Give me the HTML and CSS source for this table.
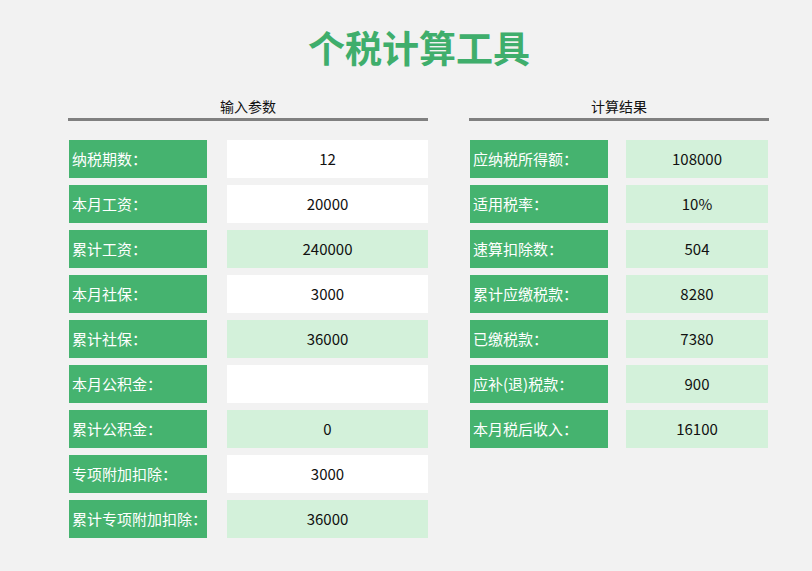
FILE: index.html
```html
<!DOCTYPE html>
<html lang="zh">
<head>
<meta charset="utf-8">
<title>个税计算工具</title>
<link rel="stylesheet" href="styles.css">
</head>
<body>
<h1 class="title">个税计算工具</h1>
<div class="panels">
  <section class="panel panel-left">
    <div class="panel-head">输入参数</div>
    <div class="rows">
      <div class="row"><div class="label">纳税期数：</div><div class="value white">12</div></div>
      <div class="row"><div class="label">本月工资：</div><div class="value white">20000</div></div>
      <div class="row"><div class="label">累计工资：</div><div class="value green">240000</div></div>
      <div class="row"><div class="label">本月社保：</div><div class="value white">3000</div></div>
      <div class="row"><div class="label">累计社保：</div><div class="value green">36000</div></div>
      <div class="row"><div class="label">本月公积金：</div><div class="value white"></div></div>
      <div class="row"><div class="label">累计公积金：</div><div class="value green">0</div></div>
      <div class="row"><div class="label">专项附加扣除：</div><div class="value white">3000</div></div>
      <div class="row"><div class="label">累计专项附加扣除：</div><div class="value green">36000</div></div>
    </div>
  </section>
  <section class="panel panel-right">
    <div class="panel-head">计算结果</div>
    <div class="rows">
      <div class="row"><div class="label">应纳税所得额：</div><div class="value green">108000</div></div>
      <div class="row"><div class="label">适用税率：</div><div class="value green">10%</div></div>
      <div class="row"><div class="label">速算扣除数：</div><div class="value green">504</div></div>
      <div class="row"><div class="label">累计应缴税款：</div><div class="value green">8280</div></div>
      <div class="row"><div class="label">已缴税款：</div><div class="value green">7380</div></div>
      <div class="row"><div class="label">应补(退)税款：</div><div class="value green">900</div></div>
      <div class="row"><div class="label">本月税后收入：</div><div class="value green">16100</div></div>
    </div>
  </section>
</div>
</body>
</html>
```
FILE: styles.css
```css
html, body {
  margin: 0;
  padding: 0;
  background: #f2f2f2;
  font-family: "Noto Sans CJK SC", "Noto Sans", sans-serif;
}
.title {
  margin: 0;
  padding-top: 22px;
  height: 50px;
  line-height: 50px;
  text-align: center;
  font-size: 37px;
  font-weight: 700;
  color: #3fae6c;
  padding-left: 26px;
}
.panels {
  display: flex;
  padding-left: 68px;
  gap: 41px;
  margin-top: 20px;
}
.panel-left { width: 360px; }
.panel-right { width: 300px; }
.panel-head {
  text-align: center;
  font-size: 14px;
  line-height: 20px;
  padding-top: 4px;
  height: 22px;
  color: #111;
  border-bottom: 3px solid #808080;
}
.rows {
  display: flex;
  flex-direction: column;
  gap: 7px;
  margin-top: 19px;
  padding-left: 1px;
}
.row {
  display: flex;
  height: 38px;
}
.label {
  width: 138px;
  background: #45b36f;
  color: #fff;
  font-size: 15px;
  line-height: 38px;
  padding-left: 3px;
  box-sizing: border-box;
  white-space: nowrap;
}
.value {
  margin-left: 20px;
  flex: 1;
  font-size: 15px;
  line-height: 38px;
  text-align: center;
  color: #111;
}
.panel-right .value { margin-left: 18px; margin-right: 1px; }
.value.white { background: #ffffff; }
.value.green { background: #d3f1da; }
```
